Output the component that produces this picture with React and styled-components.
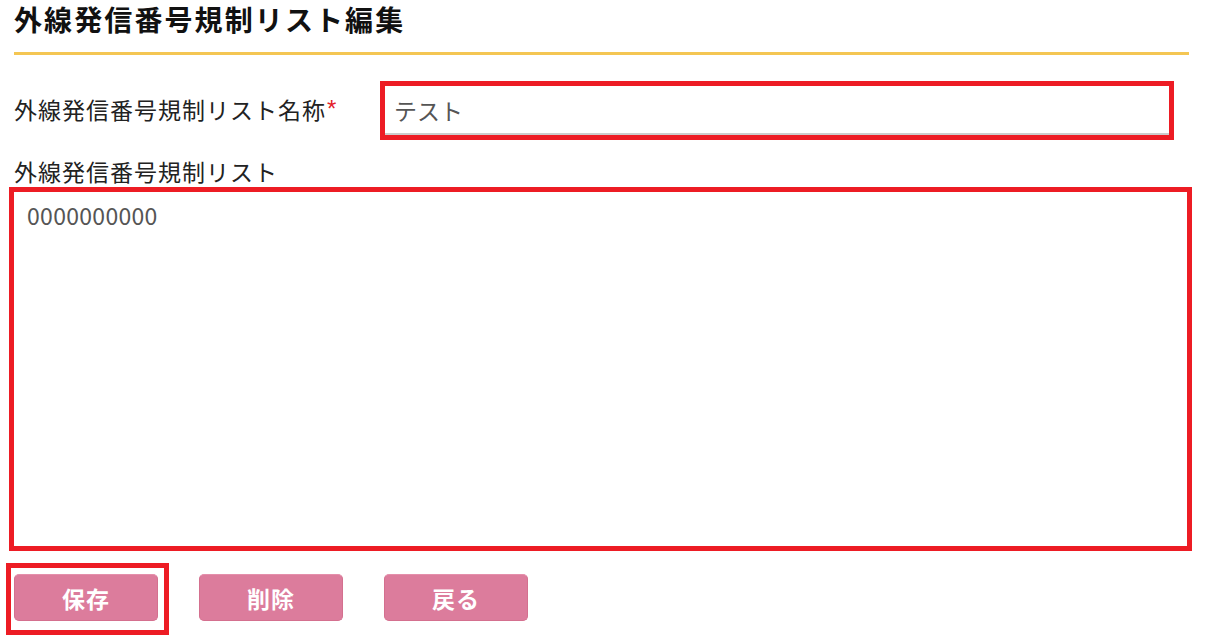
import React from "react";
import styled, { createGlobalStyle } from "styled-components";

const GlobalStyle = createGlobalStyle`
  body {
    margin: 0;
    background: #ffffff;
    font-family: "Noto Sans CJK JP", "Noto Sans", sans-serif;
    color: #222222;
  }
`;

const Page = styled.div`
  width: 1210px;
  padding: 0 21px 0 14px;
  box-sizing: border-box;
`;

const Header = styled.div`
  padding-bottom: 14px;
  border-bottom: 3px solid #f4c653;
`;

const Title = styled.h1`
  margin: 0;
  font-size: 28px;
  line-height: 38px;
  font-weight: 700;
  color: #111111;
  letter-spacing: 2.1px;
`;

const FieldRow = styled.div`
  display: flex;
  align-items: center;
  margin-top: 26px;
  margin-right: 15px;
`;

const Label = styled.label`
  display: block;
  font-size: 23px;
  line-height: 30px;
  color: #222222;
  letter-spacing: 1px;
  width: ${(p) => p.$width || "auto"};
  flex-shrink: 0;
  margin-top: ${(p) => p.$top || "0"};
`;

const Required = styled.span`
  font-family: "Liberation Sans", sans-serif;
  font-size: 24px;
  color: #e3202a;
  margin-left: 1px;
  vertical-align: top;
`;

const Highlight = styled.div`
  border: 5px solid #ed1c24;
  box-sizing: border-box;
  flex: ${(p) => (p.$grow ? 1 : "none")};
  margin: ${(p) => p.$margin || "0"};
  padding: ${(p) => p.$pad || "0"};
`;

const TextInput = styled.input`
  display: block;
  width: 100%;
  height: 49px;
  box-sizing: border-box;
  border: none;
  border-bottom: 2px solid #cccccc;
  padding: 0 9px;
  font-family: inherit;
  font-size: 23px;
  color: #555555;
  background: #ffffff;
  outline: none;
`;

const TextArea = styled.textarea`
  display: block;
  width: 100%;
  height: 354px;
  box-sizing: border-box;
  border: none;
  padding: 8px 13px;
  font-family: inherit;
  font-size: 23px;
  line-height: 30px;
  letter-spacing: 0.3px;
  color: #555555;
  resize: none;
  outline: none;
`;

const ButtonRow = styled.div`
  display: flex;
  align-items: flex-start;
  gap: 41px;
  margin-top: 12px;
`;

const Button = styled.button`
  width: 144px;
  height: 47px;
  margin-top: ${(p) => p.$top || "0"};
  border: 1px solid #d4708f;
  border-top-color: #e48fab;
  border-radius: 5px;
  background: #dc7c9c;
  color: #ffffff;
  font-family: inherit;
  font-size: 23px;
  font-weight: 700;
  letter-spacing: 1px;
  padding-top: 2px;
  cursor: pointer;
`;

export default function App() {
  return (
    <Page>
      <GlobalStyle />
      <Header>
        <Title>外線発信番号規制リスト編集</Title>
      </Header>

      <FieldRow>
        <Label $width="366px" $top="-4px">
          外線発信番号規制リスト名称<Required>*</Required>
        </Label>
        <Highlight $grow>
          <TextInput defaultValue="テスト" />
        </Highlight>
      </FieldRow>

      <Label $top="16px">外線発信番号規制リスト</Label>
      <Highlight $margin="1px -3px 0 -5px">
        <TextArea defaultValue="0000000000" />
      </Highlight>

      <ButtonRow>
        <Highlight $margin="0 -11px 0 -8px" $pad="6px 6px 9px 3px">
          <Button>保存</Button>
        </Highlight>
        <Button $top="11px">削除</Button>
        <Button $top="11px">戻る</Button>
      </ButtonRow>
    </Page>
  );
}
